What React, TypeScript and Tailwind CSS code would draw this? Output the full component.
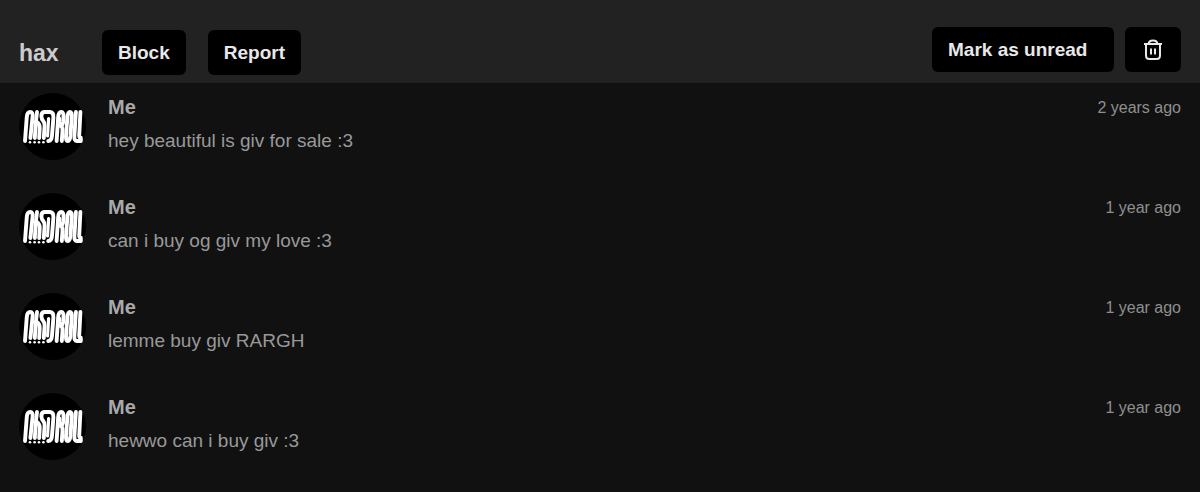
import { useState } from "react";

type Message = {
  id: number;
  author: string;
  text: string;
  sent: string;
};

const messages: Message[] = [
  { id: 1, author: "Me", text: "hey beautiful is giv for sale :3", sent: "2 years ago" },
  { id: 2, author: "Me", text: "can i buy og giv my love :3", sent: "1 year ago" },
  { id: 3, author: "Me", text: "lemme buy giv RARGH", sent: "1 year ago" },
  { id: 4, author: "Me", text: "hewwo can i buy giv :3", sent: "1 year ago" },
];

const buttonClass =
  "h-[45px] rounded-md bg-black px-4 pt-px text-[19px] font-bold text-[#e8e8e8] hover:bg-[#0a0a0a]";

function Avatar() {
  return (
    <svg viewBox="0 0 67 67" className="size-[67px] shrink-0" aria-hidden="true">
      <circle cx="33.5" cy="33.5" r="33.5" fill="#000" />
      <g fill="none" stroke="#fff" strokeWidth="3.9" strokeLinecap="round" strokeLinejoin="round">
        <path d="M6 48 7.8 24q.4-5 3.4-5 2.8 0 2.4 4.5L11.4 45" />
        <path d="M18 19 17.2 26q-.3 3-.5 6L15.8 45" />
        <path d="M17.8 29q3.2 2 2.9 6.5L20.2 45" />
        <path d="M27 19h-1.6q-3.2.2-3 4.4.2 3 1.8 4.6 1.6 1.6 1.4 5L24.8 45" />
        <path d="M26 19h5q3.8.4 3.4 5.5L33 42.5q-.4 5.5-3.8 5.5" />
        <path d="M29.6 25.5 28.6 43" strokeWidth="3.2" />
        <path d="M37.6 48 39.2 24q.4-5 3-5t2.3 5l-.3 4.5q-.4 3.5-2.3 4.5 1.8 1 1.6 4.5l-.7 10.5" />
        <path d="M41.2 25v6" strokeWidth="2" />
        <path d="M51 19q-2.2 0-2.6 5L47 43q-.3 5 1.8 5t2.6-5l1.4-19q.3-5-1.8-5Z" />
        <path d="M56.9 19 55.4 43q-.2 5 2.2 5h3.4" />
        <path d="M61.4 19 60.2 42.5q0 2 1.6 2.2v3.3" />
      </g>
      <g fill="#fff">
        <circle cx="11" cy="49.2" r="1.3" />
        <circle cx="15.6" cy="49.2" r="1.3" />
        <circle cx="20" cy="49.2" r="1.3" />
        <circle cx="24.4" cy="49.2" r="1.3" />
      </g>
    </svg>
  );
}

function TrashIcon() {
  return (
    <svg
      viewBox="0 0 20 22"
      className="h-[22px] w-5"
      fill="none"
      stroke="currentColor"
      strokeWidth="2"
      aria-hidden="true"
    >
      <path d="M1 5h18M5.5 5q.4-3.5 4.5-3.5T14.5 5M3 5v11.5q0 3.5 3.5 3.5h7q3.5 0 3.5-3.5V5" />
      <path d="M8 9.5v6M12 9.5v6" />
    </svg>
  );
}

function MessageRow({ message }: { message: Message }) {
  return (
    <li className="flex min-h-[67px]">
      <Avatar />
      <div className="ml-[22px] min-w-0 flex-1">
        <h2 className="text-xl leading-7 font-bold text-[#a9a9a9]">{message.author}</h2>
        <p className="mt-1 text-[19px] leading-8 text-[#999]">{message.text}</p>
      </div>
      <time className="shrink-0 text-base leading-[30px] text-[#8f8f8f]">{message.sent}</time>
    </li>
  );
}

export default function App() {
  const [unread, setUnread] = useState(false);

  return (
    <main className="min-h-screen bg-[#111] font-['Liberation_Sans',Arial,sans-serif]">
      <header className="flex items-start bg-[#222] px-[19px] pt-[27px] pb-2">
        <div className="flex items-center pt-[3px]">
          <h1 className="w-[83px] text-[23px] leading-7 font-bold text-[#ccc]">hax</h1>
          <div className="flex gap-[22px]">
            <button type="button" className={buttonClass}>
              Block
            </button>
            <button type="button" className={buttonClass}>
              Report
            </button>
          </div>
        </div>
        <div className="ml-auto flex gap-[11px]">
          <button
            type="button"
            aria-pressed={unread}
            onClick={() => setUnread(!unread)}
            className={`${buttonClass} w-[182px] text-left`}
          >
            Mark as unread
          </button>
          <button
            type="button"
            aria-label="Delete conversation"
            className={`${buttonClass} flex w-14 items-center justify-center`}
          >
            <TrashIcon />
          </button>
        </div>
      </header>

      <ul className="flex flex-col gap-[33px] px-[19px] pt-[10px]">
        {messages.map((message) => (
          <MessageRow key={message.id} message={message} />
        ))}
      </ul>
    </main>
  );
}
